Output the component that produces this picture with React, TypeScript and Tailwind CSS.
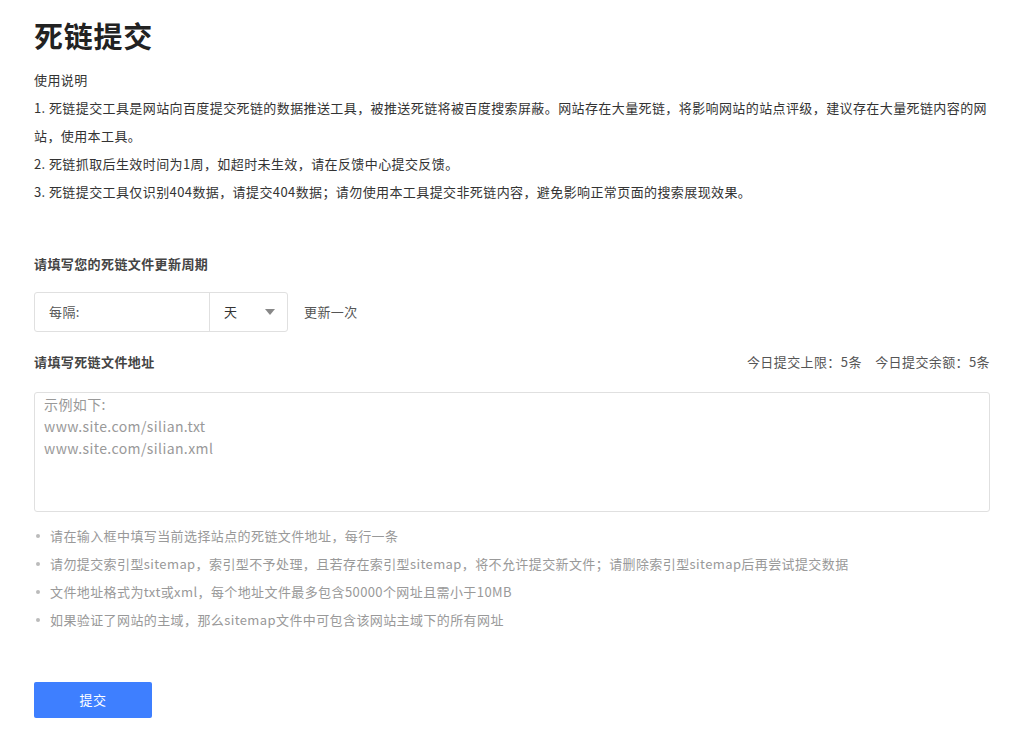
export default function App() {
  const font = { fontFamily: '"Noto Sans CJK SC", "Liberation Sans", sans-serif' };
  const tips = [
    '请在输入框中填写当前选择站点的死链文件地址，每行一条',
    '请勿提交索引型sitemap，索引型不予处理，且若存在索引型sitemap，将不允许提交新文件；请删除索引型sitemap后再尝试提交数据',
    '文件地址格式为txt或xml，每个地址文件最多包含50000个网址且需小于10MB',
    '如果验证了网站的主域，那么sitemap文件中可包含该网站主域下的所有网址',
  ];
  return (
    <div className="w-[1018px] min-h-[741px] bg-white pl-[34px] pr-[28px] pt-[14px] text-[13px] text-[#333] tracking-[0.4px]" style={font}>
      <h1 className="text-[29px] font-bold leading-[42px] text-[#222] tracking-wide">死链提交</h1>
      <div className="mt-[10px] leading-[28px] text-[#333]">
        <div>使用说明</div>
        <div>1. 死链提交工具是网站向百度提交死链的数据推送工具，被推送死链将被百度搜索屏蔽。网站存在大量死链，将影响网站的站点评级，建议存在大量死链内容的网站，使用本工具。</div>
        <div>2. 死链抓取后生效时间为1周，如超时未生效，请在反馈中心提交反馈。</div>
        <div>3. 死链提交工具仅识别404数据，请提交404数据；请勿使用本工具提交非死链内容，避免影响正常页面的搜索展现效果。</div>
      </div>
      <div className="mt-[44px] font-bold text-[#444] leading-[28px]">请填写您的死链文件更新周期</div>
      <div className="mt-[14px] flex items-center">
        <div className="flex h-[40px] w-[254px] rounded-[3px] border border-[#e0e0e0]">
          <div className="flex w-[175px] items-center border-r border-[#e0e0e0] pl-[14px] text-[#555]">每隔:</div>
          <div className="flex flex-1 items-center justify-between pl-[14px] pr-[12px] text-[#333]">
            <span>天</span>
            <svg width="10" height="6" viewBox="0 0 10 6"><path d="M0 0h10L5 6z" fill="#888" /></svg>
          </div>
        </div>
        <span className="ml-[16px] text-[#555]">更新一次</span>
      </div>
      <div className="mt-[16px] flex justify-between leading-[28px]">
        <span className="font-bold text-[#444]">请填写死链文件地址</span>
        <span className="text-[#555]">今日提交上限：5条　今日提交余额：5条</span>
      </div>
      <textarea
        className="mt-[16px] block h-[120px] w-full resize-none rounded-[3px] border border-[#e0e0e0] px-[9px] py-0 text-[14px] leading-[22px] text-[#333] placeholder:text-[#999] outline-none"
        style={font}
        placeholder={'示例如下:\nwww.site.com/silian.txt\nwww.site.com/silian.xml'}
      />
      <ul className="mt-[10px] leading-[28px] text-[#999]">
        {tips.map(t => (
          <li key={t} className="flex items-center">
            <span className="mr-[10px] ml-[2px] h-[4px] w-[4px] rounded-full bg-[#bbb]" />
            {t}
          </li>
        ))}
      </ul>
      <button className="mt-[48px] h-[36px] w-[118px] rounded-[2px] bg-[#3e7fff] text-white text-[13px]">提交</button>
    </div>
  );
}
